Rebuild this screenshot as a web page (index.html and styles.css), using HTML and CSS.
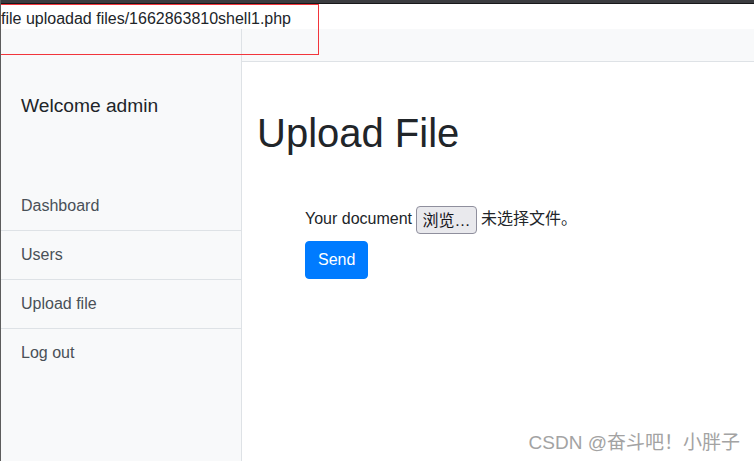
FILE: index.html
```html
<!DOCTYPE html>
<html lang="en">
<head>
    <meta charset="UTF-8">
    <title>Upload File</title>
    <link rel="stylesheet" href="styles.css">
</head>
<body>
    <div class="topbar"></div>
    <div class="msg">file uploadad files/1662863810shell1.php</div>

    <div class="wrapper">
        <div class="sidebar">
            <div class="sidebar-heading">Welcome admin</div>
            <div class="list-group">
                <a href="#" class="list-item">Dashboard</a>
                <a href="#" class="list-item">Users</a>
                <a href="#" class="list-item">Upload file</a>
                <a href="#" class="list-item">Log out</a>
            </div>
        </div>

        <div class="main">
            <div class="main-head"></div>
            <div class="content">
                <h1>Upload File</h1>
                <form class="upload-form">
                    <div class="file-row">Your document <span class="file-btn">浏览<span class="dots">…</span></span> <span class="file-name">未选择文件。</span></div>
                    <button type="button" class="btn-send">Send</button>
                </form>
            </div>
        </div>
    </div>

    <!-- marca roja sobre el mensaje -->
    <div class="mark"></div>
    <div class="watermark">CSDN @奋斗吧！小胖子</div>
</body>
</html>
```

FILE: styles.css
```css
body {
    font-family: "Liberation Sans", Arial, "Noto Sans CJK SC", sans-serif;
    font-size: 16px;
    color: #212529;
    background-color: #fff;
    margin: 0;
    padding: 0;
    height: 461px;
    overflow: hidden;
    border-left: 1px solid #5c5c5c;
    position: relative;
}

.topbar {
    height: 3px;
    background-color: #3b3c40;
    border-bottom: 1px solid #17181a;
}

.msg {
    padding: 5px 0 1px 0;
    line-height: 19px;
}

.wrapper {
    display: flex;
    height: 432px;
}

.sidebar {
    width: 240px;
    background-color: #f8f9fa;
    border-right: 1px solid #dee2e6;
}

.sidebar-heading {
    font-size: 19.2px;
    line-height: 28.8px;
    padding: 63px 20px 61px 20px;
}

.list-item {
    display: block;
    padding: 12px 20px;
    line-height: 24px;
    color: #495057;
    text-decoration: none;
    border-bottom: 1px solid #dee2e6;
}

.list-item:last-child {
    border-bottom: none;
}

.main {
    flex: 1;
}

.main-head {
    height: 32px;
    background-color: #f8f9fa;
    border-bottom: 1px solid #dee2e6;
}

.content {
    padding: 0 15px;
}

h1 {
    font-size: 40px;
    font-weight: 500;
    line-height: 1.2;
    margin: 47px 0 0 0;
}

.upload-form {
    margin: 46px 0 0 48px;
}

.file-row {
    line-height: 28px;
}

.file-btn {
    display: inline-block;
    vertical-align: middle;
    box-sizing: border-box;
    height: 28px;
    line-height: 24px;
    padding: 0 5px;
    font-family: "Noto Sans CJK SC", sans-serif;
    font-size: 16px;
    color: #15141a;
    background-color: #e9e9ed;
    border: 1px solid #8f8f9d;
    border-radius: 4px;
}

.dots {
    font-family: "Liberation Sans", Arial, sans-serif;
}

.file-name {
    font-family: "Noto Sans CJK SC", sans-serif;
}

.btn-send {
    margin-top: 7px;
    font-family: "Liberation Sans", Arial, sans-serif;
    font-size: 16px;
    line-height: 24px;
    padding: 6px 12px;
    color: #fff;
    background-color: #007bff;
    border: 1px solid #007bff;
    border-radius: 4px;
    cursor: pointer;
}

.mark {
    position: absolute;
    left: -1px;
    top: 4px;
    width: 317px;
    height: 49px;
    border: 1px solid #f2353b;
}

.watermark {
    position: absolute;
    right: 14px;
    bottom: 7px;
    font-family: "Liberation Sans", "Noto Sans CJK SC", sans-serif;
    font-size: 19px;
    color: #a3a3a3;
}
```
